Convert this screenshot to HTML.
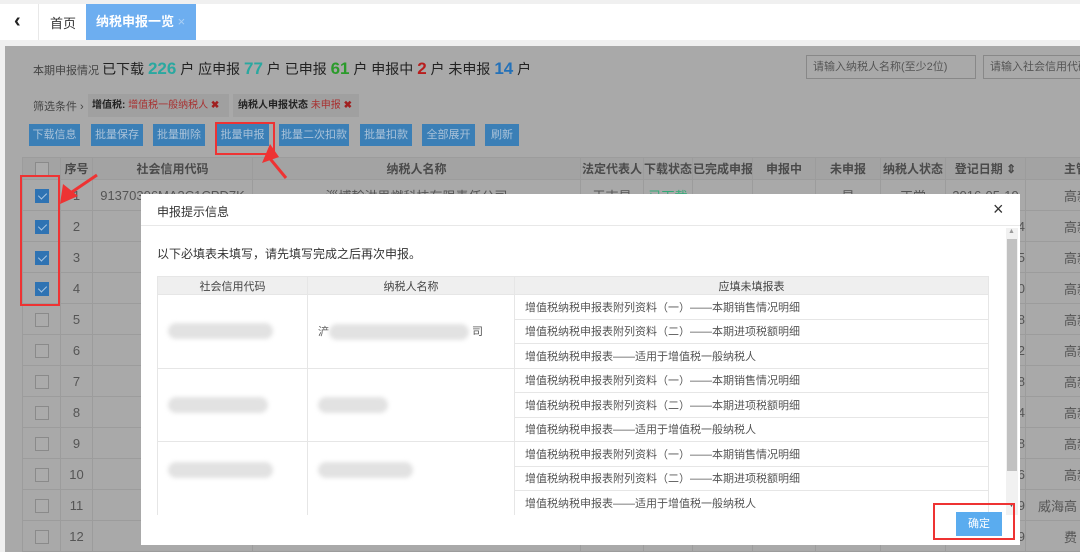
<!DOCTYPE html>
<html><head><meta charset="utf-8"><style>
*{margin:0;padding:0;box-sizing:border-box}
body{width:1080px;height:552px;overflow:hidden;background:#f0f0f0;font-family:"Liberation Sans","Noto Sans CJK SC",sans-serif;font-size:12px;color:#333;position:relative}
.abs{position:absolute}
.topbar{left:0;top:4px;width:1080px;height:36px;background:#fff}
.main{left:5px;top:46px;width:1075px;height:506px;background:#a9a9a9}
.btn{position:absolute;top:124px;height:22px;background:#3b7fb6;color:#a9c2d9;font-size:11px;line-height:22px;text-align:center}
table.g{position:absolute;left:22px;top:157px;border-collapse:collapse;table-layout:fixed;width:1080px}
table.g td{border:1px solid #9c9c9c;height:31px;text-align:center;color:#555;font-size:13px;white-space:nowrap;overflow:hidden}
table.g tr.h td{height:22px;font-size:12px;color:#4a4a4a;font-weight:bold;background:#a3a3a3}
.cb{display:inline-block;width:14px;height:14px;border:1px solid #8a8a8a;vertical-align:middle;background:#ababab}
.cb.on{background:#2f73b3;border-color:#2f73b3;position:relative}
.cb.on:after{content:"";position:absolute;left:4px;top:1px;width:4px;height:7px;border:solid #a9c7e3;border-width:0 1.5px 1.5px 0;transform:rotate(45deg)}
.modal{left:141px;top:194px;width:879px;height:351px;background:#fff}
table.m{position:absolute;left:16px;top:82px;border-collapse:collapse;table-layout:fixed;width:832px}
table.m td{border:1px solid #e6e6e6;font-size:11px;color:#555;height:24.5px;text-align:left;padding-left:10px;white-space:nowrap}
table.m tr.h td{background:#efefef;text-align:center;height:18px;padding:0;color:#444}
.blur{display:inline-block;height:16px;background:#e2e2e2;border-radius:8px;filter:blur(2px);vertical-align:middle}
.red{position:absolute;border:2px solid #e33}
</style></head><body>
<div class="abs topbar"></div>
<div class="abs" style="left:14px;top:10px;font-size:20px;font-weight:bold;color:#222">&#8249;</div>
<div class="abs" style="left:38px;top:4px;width:1px;height:36px;background:#e8e8e8"></div>
<div class="abs" style="left:50px;top:13px;font-size:13px;color:#333">首页</div>
<div class="abs" style="left:86px;top:4px;width:110px;height:36px;background:#6daef0;color:#fff;font-size:13px;font-weight:bold;line-height:36px;padding-left:10px">纳税申报一览 <span style="color:#a9cff5;font-weight:normal">×</span></div>
<div class="abs main"></div>
<div class="abs" style="left:33px;top:59px;font-size:11px;color:#444;white-space:nowrap">本期申报情况 <span style="font-size:14px;color:#222">已下载 <b style="font-size:17px;color:#2aa8a0">226</b> 户 应申报 <b style="font-size:17px;color:#2aa8a0">77</b> 户 已申报 <b style="font-size:17px;color:#2b9b2b">61</b> 户 申报中 <b style="font-size:17px;color:#b81d1d">2</b> 户 未申报 <b style="font-size:17px;color:#2471b8">14</b> 户</span></div>
<div class="abs" style="left:806px;top:55px;width:170px;height:24px;border:1px solid #888;font-size:11px;color:#555;line-height:22px;padding-left:6px">请输入纳税人名称(至少2位)</div>
<div class="abs" style="left:983px;top:55px;width:100px;height:24px;border:1px solid #888;font-size:11px;color:#555;line-height:22px;padding-left:6px;white-space:nowrap;overflow:hidden">请输入社会信用代码</div>
<div class="abs" style="left:33px;top:98px;font-size:11px;color:#444">筛选条件 ›</div>
<div class="abs" style="left:88px;top:94px;width:141px;height:23px;background:#a0a0a0;font-size:10px;line-height:23px;padding-left:4px;color:#222;font-weight:bold">增值税: <span style="color:#a83030;font-weight:normal">增值税一般纳税人</span> <span style="color:#a02020">✖</span></div>
<div class="abs" style="left:233px;top:94px;width:126px;height:23px;background:#a0a0a0;font-size:10px;line-height:23px;padding-left:5px;color:#222;font-weight:bold">纳税人申报状态 <span style="color:#a83030;font-weight:normal">未申报</span> <span style="color:#a02020">✖</span></div>
<div class="btn" style="left:29px;width:51px">下载信息</div>
<div class="btn" style="left:91px;width:52px">批量保存</div>
<div class="btn" style="left:153px;width:52px">批量删除</div>
<div class="btn" style="left:216px;width:53px">批量申报</div>
<div class="btn" style="left:279px;width:70px">批量二次扣款</div>
<div class="btn" style="left:360px;width:52px">批量扣款</div>
<div class="btn" style="left:422px;width:53px">全部展开</div>
<div class="btn" style="left:485px;width:34px">刷新</div>
<table class="g">
<colgroup><col style="width:38px"><col style="width:32px"><col style="width:160px"><col style="width:328px"><col style="width:63px"><col style="width:49px"><col style="width:60px"><col style="width:63px"><col style="width:65px"><col style="width:65px"><col style="width:80px"><col style="width:77px"></colgroup>
<tr class="h"><td><span class="cb"></span></td><td>序号</td><td>社会信用代码</td><td>纳税人名称</td><td>法定代表人</td><td>下载状态</td><td>已完成申报</td><td>申报中</td><td>未申报</td><td>纳税人状态</td><td>登记日期 ⇕</td><td style="text-align:left;padding-left:38px">主管</td></tr>
<tr><td><span class="cb on"></span></td><td>1</td><td>91370306MA3C1CPD7K</td><td>淄博翰洪思燃科技有限责任公司</td><td>王志昊</td><td style="color:#3a7">已下载</td><td></td><td></td><td>是</td><td>正常</td><td>2016-05-19</td><td style="text-align:left;padding-left:38px">高新</td></tr>
<tr><td><span class="cb on"></span></td><td>2</td><td>913703</td><td></td><td></td><td></td><td></td><td></td><td></td><td></td><td style="text-align:right">4</td><td style="text-align:left;padding-left:38px">高新</td></tr>
<tr><td><span class="cb on"></span></td><td>3</td><td>913703</td><td></td><td></td><td></td><td></td><td></td><td></td><td></td><td style="text-align:right">5</td><td style="text-align:left;padding-left:38px">高新</td></tr>
<tr><td><span class="cb on"></span></td><td>4</td><td>913703</td><td></td><td></td><td></td><td></td><td></td><td></td><td></td><td style="text-align:right">0</td><td style="text-align:left;padding-left:38px">高新</td></tr>
<tr><td><span class="cb"></span></td><td>5</td><td>913703</td><td></td><td></td><td></td><td></td><td></td><td></td><td></td><td style="text-align:right">8</td><td style="text-align:left;padding-left:38px">高新</td></tr>
<tr><td><span class="cb"></span></td><td>6</td><td>913703</td><td></td><td></td><td></td><td></td><td></td><td></td><td></td><td style="text-align:right">2</td><td style="text-align:left;padding-left:38px">高新</td></tr>
<tr><td><span class="cb"></span></td><td>7</td><td>913703</td><td></td><td></td><td></td><td></td><td></td><td></td><td></td><td style="text-align:right">8</td><td style="text-align:left;padding-left:38px">高新</td></tr>
<tr><td><span class="cb"></span></td><td>8</td><td>913703</td><td></td><td></td><td></td><td></td><td></td><td></td><td></td><td style="text-align:right">4</td><td style="text-align:left;padding-left:38px">高新</td></tr>
<tr><td><span class="cb"></span></td><td>9</td><td>913703</td><td></td><td></td><td></td><td></td><td></td><td></td><td></td><td style="text-align:right">8</td><td style="text-align:left;padding-left:38px">高新</td></tr>
<tr><td><span class="cb"></span></td><td>10</td><td>913703</td><td></td><td></td><td></td><td></td><td></td><td></td><td></td><td style="text-align:right">6</td><td style="text-align:left;padding-left:38px">高新</td></tr>
<tr><td><span class="cb"></span></td><td>11</td><td>913710</td><td></td><td></td><td></td><td></td><td></td><td></td><td></td><td style="text-align:right">9</td><td style="text-align:left;padding-left:12px">威海高</td></tr>
<tr><td><span class="cb"></span></td><td>12</td><td>913713</td><td></td><td></td><td></td><td></td><td></td><td></td><td></td><td style="text-align:right">9</td><td style="text-align:left;padding-left:38px">费</td></tr>
</table>
<div class="abs modal">
 <div class="abs" style="left:16px;top:9px;font-size:12px;color:#333">申报提示信息</div>
 <div class="abs" style="left:852px;top:5px;font-size:18px;color:#333">×</div>
 <div class="abs" style="left:0;top:31px;width:879px;height:1px;background:#e8e8e8"></div>
 <div class="abs" style="left:16px;top:51px;font-size:12px;color:#333">以下必填表未填写，请先填写完成之后再次申报。</div>
 <table class="m">
 <colgroup><col style="width:150px"><col style="width:207px"><col></colgroup>
 <tr class="h"><td>社会信用代码</td><td>纳税人名称</td><td>应填未填报表</td></tr>
 <tr><td rowspan="3"><span class="blur" style="width:105px"></span></td><td rowspan="3">浐<span class="blur" style="width:140px"></span> 司</td><td>增值税纳税申报表附列资料（一）——本期销售情况明细</td></tr>
 <tr><td>增值税纳税申报表附列资料（二）——本期进项税额明细</td></tr>
 <tr><td>增值税纳税申报表——适用于增值税一般纳税人</td></tr>
 <tr><td rowspan="3"><span class="blur" style="width:100px"></span></td><td rowspan="3"><span class="blur" style="width:70px"></span></td><td>增值税纳税申报表附列资料（一）——本期销售情况明细</td></tr>
 <tr><td>增值税纳税申报表附列资料（二）——本期进项税额明细</td></tr>
 <tr><td>增值税纳税申报表——适用于增值税一般纳税人</td></tr>
 <tr><td rowspan="3" style="vertical-align:top;padding-top:20px"><span class="blur" style="width:105px"></span></td><td rowspan="3" style="vertical-align:top;padding-top:20px"><span class="blur" style="width:95px"></span></td><td>增值税纳税申报表附列资料（一）——本期销售情况明细</td></tr>
 <tr><td>增值税纳税申报表附列资料（二）——本期进项税额明细</td></tr>
 <tr><td>增值税纳税申报表——适用于增值税一般纳税人</td></tr>
 </table>
 <div class="abs" style="left:0;top:321px;width:879px;height:30px;background:#fff"></div>
 <div class="abs" style="left:865px;top:34px;width:12px;height:287px;background:#f1f1f1"></div>
 <div class="abs" style="left:866px;top:45px;width:10px;height:232px;background:#c1c1c1"></div>
 <div class="abs" style="left:867px;top:34px;font-size:7px;color:#999">▲</div>
 <div class="abs" style="left:867px;top:308px;font-size:7px;color:#555">▼</div>
 <div class="abs" style="left:815px;top:318px;width:46px;height:24px;background:#5aacef;color:#fff;font-size:11px;line-height:24px;text-align:center">确定</div>
</div>
<div class="red" style="left:20px;top:175px;width:40px;height:131px"></div>
<div class="red" style="left:215px;top:122px;width:60px;height:33px"></div>
<div class="red" style="left:933px;top:503px;width:82px;height:37px"></div>
<svg class="abs" style="left:0;top:0" width="1080" height="552">
<path d="M97 175 L66 196" stroke="#e33" stroke-width="3"/>
<path d="M60 204 L63 184 L78 196 Z" fill="#e33"/>
<path d="M286 178 L267 155" stroke="#e33" stroke-width="3"/>
<path d="M270 144 L262 163 L279 157 Z" fill="#e33"/>
</svg>
</body></html>
